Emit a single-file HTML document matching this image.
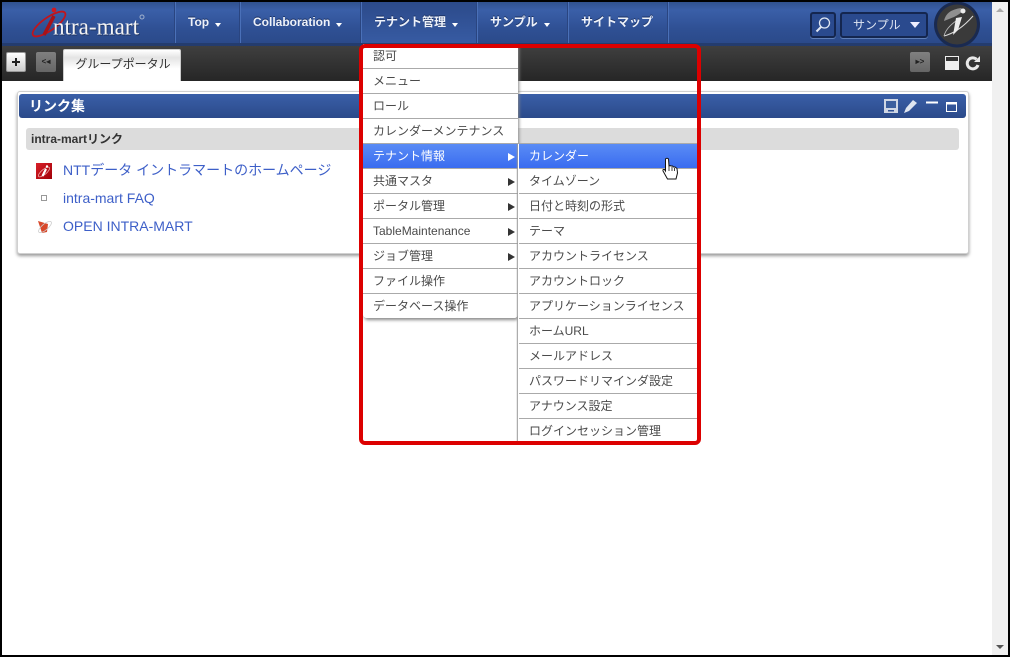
<!DOCTYPE html>
<html><head><meta charset="utf-8">
<style>
html,body{margin:0;padding:0;width:1010px;height:657px;overflow:hidden;background:#fff;font-family:"Liberation Sans","Noto Sans CJK JP",sans-serif}
.a{position:absolute}
#hdr{left:2px;top:2px;width:990px;height:41px;background:linear-gradient(#30518f,#3a5fa8 20%,#2f5094 65%,#2b4a8a)}
#hb{left:2px;top:43px;width:990px;height:3px;background:#243c6e}
#tb{left:2px;top:46px;width:990px;height:35px;background:linear-gradient(#3f3f3f,#262626)}
.sep{top:2px;width:1px;height:41px;background:#4a70b8;box-shadow:-1px 0 0 #2a4580}
.nav{top:15px;font-size:12px;font-weight:bold;color:#eef2fa;line-height:15px;white-space:nowrap;text-shadow:0 -1px 0 #1c3264}
.nav i{display:inline-block;width:0;height:0;border-left:3.5px solid transparent;border-right:3.5px solid transparent;border-top:4px solid #fff;margin-left:6px;vertical-align:-1px}
.m{background:#fff;box-sizing:border-box;font-size:12px;color:#4a4a4a;line-height:24.500px;padding-left:10px;white-space:nowrap;border-bottom:1px solid #aaa;height:25px;left:363px;width:155px}
.s{left:519px;width:178px}
.hl{background:linear-gradient(#5a8cf5,#3a6cf0);color:#fff}
.ar{position:absolute;right:3px;top:9px;width:0;height:0;border-left:7px solid #333;border-top:4px solid transparent;border-bottom:4px solid transparent}
.lk{font-size:14px;color:#3d5fc8;left:63px;line-height:18px;white-space:nowrap}
.g{width:20px;height:20px;box-sizing:border-box;border-radius:2px}
</style></head><body>
<div class="a" id="hdr"></div><div class="a" id="hb"></div><div class="a" id="tb"></div>

<svg class="a" style="left:30px;top:6px" width="120" height="36">
<ellipse cx="19" cy="18" rx="19.500" ry="6.500" transform="rotate(-35 19 18)" fill="none" stroke="#c0151c" stroke-width="1.800"/>
<circle cx="24" cy="4" r="2.400" fill="#d01820"/>
<path d="M24 10L14 29" stroke="#a81218" stroke-width="3.500"/>
<text x="23" y="28.500" font-family="Liberation Serif" font-size="24" fill="#000" opacity=".35" textLength="86" lengthAdjust="spacingAndGlyphs" transform="translate(.8 .8)">ntra-mart</text>
<text x="23" y="28.500" font-family="Liberation Serif" font-size="24" fill="#f4f4f4" textLength="86" lengthAdjust="spacingAndGlyphs">ntra-mart</text>
<circle cx="112" cy="11" r="2" fill="none" stroke="#9fb0cc"/>
</svg>

<div class="a sep" style="left:175px"></div><div class="a sep" style="left:240px"></div>
<div class="a" style="left:361px;top:2px;width:115px;height:41px;background:linear-gradient(#2c4a8a,#375ba3)"></div>
<div class="a sep" style="left:361px"></div><div class="a sep" style="left:477px"></div>
<div class="a sep" style="left:568px"></div><div class="a sep" style="left:668px"></div>
<div class="a nav" style="left:188px">Top<i></i></div>
<div class="a nav" style="left:253px">Collaboration<i></i></div>
<div class="a nav" style="left:374px">テナント管理<i></i></div>
<div class="a nav" style="left:490px">サンプル<i></i></div>
<div class="a nav" style="left:581px">サイトマップ</div>

<div class="a" style="left:810px;top:12px;width:26px;height:26px;box-sizing:border-box;background:#2a4a8e;border:2px solid #14264f;box-shadow:0 1px 0 #5f7fb8;border-radius:3px"></div>
<svg class="a" style="left:813px;top:15px" width="20" height="20"><circle cx="11.500" cy="8" r="5" fill="none" stroke="#dfe6f2" stroke-width="1.300"/><path d="M8 12L3.500 16.500" stroke="#dfe6f2" stroke-width="2"/></svg>
<div class="a" style="left:840px;top:12px;width:88px;height:26px;box-sizing:border-box;background:#2a4a8e;border:2px solid #14264f;box-shadow:0 1px 0 #5f7fb8;border-radius:3px;color:#dfe6f2;font-size:12px;line-height:22px;padding-left:11px">サンプル</div>
<div class="a" style="left:910px;top:22px;width:0;height:0;border-left:5px solid transparent;border-right:5px solid transparent;border-top:6px solid #eef"></div>
<svg class="a" style="left:932px;top:1px" width="50" height="48">
<circle cx="25" cy="23.500" r="23" fill="#1a2a50"/><circle cx="25" cy="23.500" r="20" fill="#3a3a3a"/>
<path d="M12 20Q14 9 29 7Q34 10 22 16Z" fill="#8f8f8f"/>
<path d="M12 35Q27 31 41 15" fill="none" stroke="#dcdcdc" stroke-width="1"/>
<path d="M12 35Q14 27 24 20" fill="none" stroke="#bbb" stroke-width=".8"/>
<path d="M30 16L24 17L21 34L26 29Z" fill="#ececec"/>
<circle cx="31" cy="10" r="2.500" fill="#eee"/>
</svg>

<div class="a g" style="left:6px;top:52px;background:linear-gradient(#fff,#ccc);border:1px solid #999"></div>
<div class="a" style="left:12px;top:61px;width:8px;height:2px;background:#222"></div>
<div class="a" style="left:15px;top:58px;width:2px;height:8px;background:#222"></div>
<div class="a g" style="left:36px;top:52px;background:linear-gradient(#808080,#666);color:#222;font:bold 8px/20px 'Liberation Sans';text-align:center">&lt;◂</div>
<div class="a" style="left:63px;top:49px;width:118px;height:32px;box-sizing:border-box;background:linear-gradient(#fff,#e4e4e4 25%,#fff 60%);border:1px solid #ccc;border-bottom:0;border-radius:2px 2px 0 0;font-size:12px;color:#333;text-align:center;line-height:28px;padding-left:2px">グループポータル</div>
<div class="a g" style="left:910px;top:52px;background:linear-gradient(#808080,#666);color:#222;font:bold 8px/20px 'Liberation Sans';text-align:center">▸&gt;</div>
<div class="a" style="left:945px;top:56px;width:14px;height:14px;background:linear-gradient(#333 0 4px,#eee 4px);box-sizing:border-box;border:1px solid #eee;border-top-width:1px"></div>
<svg class="a" style="left:965px;top:55px" width="16" height="16"><path d="M13 10A5.500 5.500 0 1 1 11.500 4.300" fill="none" stroke="#e8e8e8" stroke-width="3"/><path d="M9 7L15 7L15 1Z" fill="#e8e8e8"/></svg>

<div class="a" style="left:17px;top:91px;width:952px;height:163px;box-sizing:border-box;background:#fff;border:1px solid #d0d0d0;border-radius:3px;box-shadow:0 2px 3px #999"></div>
<div class="a" style="left:19px;top:94px;width:947px;height:24px;background:linear-gradient(#3a5fa8,#2b4a8a);border-radius:3px"></div>
<div class="a" style="left:29px;top:97px;font-size:14px;font-weight:bold;color:#fff;line-height:18px">リンク集</div>
<svg class="a" style="left:883px;top:98px" width="76" height="18">
<rect x="1" y="1" width="14" height="14" fill="#cfd6e4"/><rect x="3" y="3" width="10" height="7" fill="#3c5f9e"/><rect x="5" y="12" width="6" height="1.500" fill="#2f5094"/>
<path d="M21 15L23 10L30 2L34 5L26 13Z" fill="#dfe5f0"/>
<rect x="43" y="3.500" width="12" height="2" fill="#fff"/>
<rect x="63.500" y="4.500" width="10" height="9" fill="none" stroke="#fff" stroke-width="1"/><rect x="63" y="4" width="11" height="2.500" fill="#fff"/>
</svg>
<div class="a" style="left:26px;top:128px;width:933px;height:22px;background:#dcdcdc;border-radius:3px"></div>
<div class="a" style="left:31px;top:131px;font-size:12px;font-weight:bold;color:#333;line-height:16px">intra-martリンク</div>

<div class="a" style="left:36px;top:163px;width:16px;height:16px;background:linear-gradient(135deg,#d82028,#a00008)"></div>
<svg class="a" style="left:36px;top:163px" width="16" height="16"><ellipse cx="8" cy="9" rx="7" ry="2.500" transform="rotate(-40 8 9)" fill="none" stroke="#eaa" stroke-width=".8"/><path d="M10 6L6.500 13" stroke="#fff" stroke-width="2.200"/><circle cx="11" cy="3.500" r="1.200" fill="#fff"/></svg>
<div class="a" style="left:41px;top:195px;width:6px;height:6px;box-sizing:border-box;border:1px solid #999"></div>
<svg class="a" style="left:36px;top:218px" width="18" height="17"><path d="M2 3L12 6L11 14L6 15Z" fill="#d8482a"/><ellipse cx="9" cy="9" rx="8" ry="3" transform="rotate(-40 9 9)" fill="none" stroke="#ccc" stroke-width=".8"/></svg>
<div class="a lk" style="top:161px">NTTデータ イントラマートのホームページ</div>
<div class="a lk" style="top:189px">intra-mart FAQ</div>
<div class="a lk" style="top:217px">OPEN INTRA-MART</div>

<div class="a" style="left:363px;top:44px;width:155px;height:274px;background:#fff;border-radius:0 0 4px 4px;box-shadow:1px 2px 3px #888"></div>
<div class="a m" style="top:44px">認可</div>
<div class="a m" style="top:69px">メニュー</div>
<div class="a m" style="top:94px">ロール</div>
<div class="a m" style="top:119px">カレンダーメンテナンス</div>
<div class="a m hl" style="top:144px">テナント情報<span class="ar" style="border-left-color:#fff"></span></div>
<div class="a m" style="top:169px">共通マスタ<span class="ar"></span></div>
<div class="a m" style="top:194px">ポータル管理<span class="ar"></span></div>
<div class="a m" style="top:219px">TableMaintenance<span class="ar"></span></div>
<div class="a m" style="top:244px">ジョブ管理<span class="ar"></span></div>
<div class="a m" style="top:269px">ファイル操作</div>
<div class="a m" style="top:294px;border-bottom:0;height:24px;border-radius:0 0 4px 4px">データベース操作</div>

<div class="a" style="left:518px;top:144px;width:180px;height:300px;background:#fff;box-shadow:-1px 0 1px #999"></div>
<div class="a m s hl" style="top:144px">カレンダー</div>
<div class="a m s" style="top:169px">タイムゾーン</div>
<div class="a m s" style="top:194px">日付と時刻の形式</div>
<div class="a m s" style="top:219px">テーマ</div>
<div class="a m s" style="top:244px">アカウントライセンス</div>
<div class="a m s" style="top:269px">アカウントロック</div>
<div class="a m s" style="top:294px">アプリケーションライセンス</div>
<div class="a m s" style="top:319px">ホームURL</div>
<div class="a m s" style="top:344px">メールアドレス</div>
<div class="a m s" style="top:369px">パスワードリマインダ設定</div>
<div class="a m s" style="top:394px">アナウンス設定</div>
<div class="a m s" style="top:419px;border-bottom:0;height:24px">ログインセッション管理</div>
<div class="a" style="left:363px;top:143px;width:334px;height:1px;background:#aaa"></div>

<svg class="a" style="left:662px;top:157px" width="18" height="24"><path d="M3.500 2Q5 .5 6.500 2L7 9L8 8.500L9 9L10.500 9L11.500 10L13 10L15 11.500L15.500 16L14 22L5.500 22L1 14Q.5 12 2.500 12.500L3.500 14Z" fill="#fff" stroke="#111" stroke-width="1"/><path d="M7 9V14M10 10V14M12.500 11V14" stroke="#111" stroke-width=".8"/></svg>

<div class="a" style="left:359px;top:44px;width:342px;height:401px;box-sizing:border-box;border:4px solid #dc0000;border-radius:6px"></div>

<div class="a" style="left:992px;top:2px;width:16px;height:653px;background:#f0f0f0"></div>
<div class="a" style="left:996px;top:8px;width:0;height:0;border-left:4px solid transparent;border-right:4px solid transparent;border-bottom:4px solid #aaa"></div>
<div class="a" style="left:996px;top:645px;width:0;height:0;border-left:4px solid transparent;border-right:4px solid transparent;border-top:4px solid #555"></div>
<div class="a" style="left:0;top:0;width:1010px;height:2px;background:#000"></div>
<div class="a" style="left:0;top:655px;width:1010px;height:2px;background:#000"></div>
<div class="a" style="left:0;top:0;width:2px;height:657px;background:#000"></div>
<div class="a" style="left:1008px;top:0;width:2px;height:657px;background:#000"></div>
</body></html>
